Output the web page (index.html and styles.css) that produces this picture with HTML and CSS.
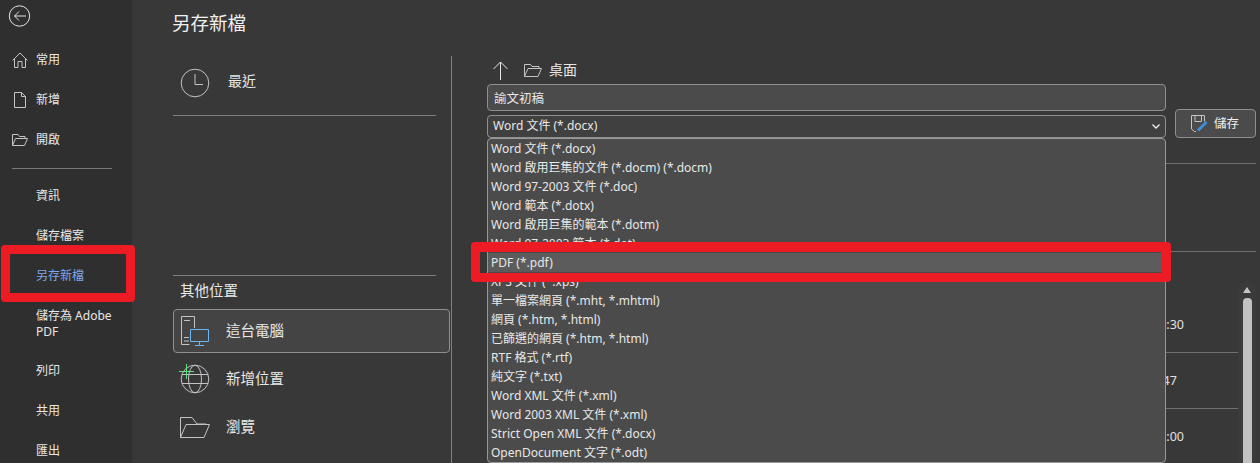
FILE: index.html
```html
<!DOCTYPE html>
<html lang="zh-Hant">
<head>
    <meta charset="UTF-8">
    <title>另存新檔</title>
    <link rel="stylesheet" href="styles.css">
</head>
<body>

<div class="app">
    <!-- Backstage menu -->
    <aside class="sidebar">
        <button class="back-btn" aria-label="返回">
            <svg width="23" height="22" viewBox="0 0 23 22"><circle cx="11.5" cy="11" r="10.2"/><path d="M6.5 11H18M11 6.5L6.5 11L11 15.5"/></svg>
        </button>
        <ul class="nav nav-top">
            <li class="nav-item">
                <span class="nav-icon"><svg width="16" height="16" viewBox="0 0 16 16"><path d="M.5 8.5L8 1L15.5 8.5M2.5 7V15.5H6V9.5H10V15.5H13.5V7"/></svg></span>常用
            </li>
            <li class="nav-item">
                <span class="nav-icon"><svg width="12" height="16" viewBox="0 0 12 16"><path d="M.5 .5H7.5L11.5 4.5V15.5H.5ZM7.5 .5V4.5H11.5"/></svg></span>新增
            </li>
            <li class="nav-item">
                <span class="nav-icon"><svg width="16" height="12" viewBox="0 0 16 12"><path d="M.5 11.5V.5H6L7.5 2.5H13V4.5M3.5 4.5H15.5L12.5 11.5H.5Z"/></svg></span>開啟
            </li>
        </ul>
        <hr class="nav-divider">
        <ul class="nav">
            <li class="nav-item">資訊</li>
            <li class="nav-item">儲存檔案</li>
            <li class="nav-item active">另存新檔</li>
            <li class="nav-item tall">儲存為 Adobe PDF</li>
            <li class="nav-item">列印</li>
            <li class="nav-item">共用</li>
            <li class="nav-item">匯出</li>
        </ul>
    </aside>

    <main class="main">
        <h1 class="page-title">另存新檔</h1>
        <div class="columns">
            <!-- Locations -->
            <section class="places">
                <div class="place recent">
                    <svg class="place-icon" width="30" height="30" viewBox="0 0 30 30"><circle cx="15" cy="15" r="13.8"/><path d="M15 6V16.5H23"/></svg>
                    <span class="recent-label">最近</span>
                </div>
                <div class="places-gap"></div>
                <h2 class="places-title">其他位置</h2>
                <div class="place selected">
                    <svg class="place-icon" width="30" height="30" viewBox="0 0 30 30"><path d="M14.5 12V.5H1.5V28.5H9.5M4 4.5H10M4 21.5H9M4 25H9"/><path class="blue" d="M10.5 13.5H28.5V25.5H10.5ZM19.5 25.5V29.5M15 29.5H24"/></svg>
                    <span>這台電腦</span>
                </div>
                <div class="place">
                    <svg class="place-icon" width="30" height="30" viewBox="0 0 30 30"><circle cx="15" cy="15" r="13.8"/><ellipse cx="15" cy="15" rx="6.5" ry="13.8"/><path d="M2 10.5H28M2 19.5H28"/><path class="green" d="M6.5 0V15M-1 7.5H14"/></svg>
                    <span>新增位置</span>
                </div>
                <div class="place">
                    <svg class="place-icon" width="30" height="21" viewBox="0 0 30 21"><path d="M.5 20.5V.5H12L17 7H26V7.5M6 7.5H29.5L24 20.5H.5Z"/></svg>
                    <span>瀏覽</span>
                </div>
            </section>

            <!-- Save form -->
            <section class="save-pane">
                <div class="path-row">
                    <svg class="up-arrow" width="15" height="19" viewBox="0 0 15 19"><path d="M7.5 1V19M.5 8L7.5 1L14.5 8"/></svg>
                    <svg class="path-folder" width="18" height="13" viewBox="0 0 18 13"><path d="M.5 12.5V.5H6.5L8 2.5H15V4.5M4 4.5H17.5L14 12.5H.5Z"/></svg>
                    <span class="path-name">桌面</span>
                </div>
                <div class="form-row">
                    <div class="fields">
                        <div class="name-input">諭文初稿</div>
                        <div class="type-select">
                            <span>Word 文件 (*.docx)</span>
                            <svg width="8" height="5" viewBox="0 0 8 5"><path d="M.5 .5L4 4L7.5 .5"/></svg>
                        </div>
                        <ul class="type-list">
                            <li>Word 文件 (*.docx)</li>
                            <li>Word 啟用巨集的文件 (*.docm) (*.docm)</li>
                            <li>Word 97-2003 文件 (*.doc)</li>
                            <li>Word 範本 (*.dotx)</li>
                            <li>Word 啟用巨集的範本 (*.dotm)</li>
                            <li>Word 97-2003 範本 (*.dot)</li>
                            <li class="current">PDF (*.pdf)</li>
                            <li>XPS 文件 (*.xps)</li>
                            <li>單一檔案網頁 (*.mht, *.mhtml)</li>
                            <li>網頁 (*.htm, *.html)</li>
                            <li>已篩選的網頁 (*.htm, *.html)</li>
                            <li>RTF 格式 (*.rtf)</li>
                            <li>純文字 (*.txt)</li>
                            <li>Word XML 文件 (*.xml)</li>
                            <li>Word 2003 XML 文件 (*.xml)</li>
                            <li>Strict Open XML 文件 (*.docx)</li>
                            <li>OpenDocument 文字 (*.odt)</li>
                        </ul>
                    </div>
                    <button class="save-btn">
                        <svg width="17" height="17" viewBox="0 0 17 17"><path d="M5 16.5H3.5L.5 14V.5H13.5V6.5M4 .5V6.5H10.5V.5"/><path class="pencil" d="M7 15.5L15.5 7"/></svg>
                        <span class="save-label">儲存</span>
                    </button>
                </div>
                <div class="file-head"></div>
                <div class="file-area">
                    <div class="file-rows">
                        <div class="file-spacer"></div>
                        <div class="file-row"><span>10:30</span></div>
                        <div class="file-row"><span>9:47</span></div>
                        <div class="file-row"><span>12:00</span></div>
                    </div>
                    <div class="scrollbar">
                        <div class="scroll-up"></div>
                        <div class="scroll-thumb"></div>
                    </div>
                </div>
            </section>
        </div>
    </main>
</div>

<!-- Red annotation boxes -->
<div class="callout callout-menu"></div>
<div class="callout callout-pdf"></div>

</body>
</html>
```

FILE: styles.css
```css
* { margin: 0; padding: 0; box-sizing: border-box; }
html, body { height: 100%; overflow: hidden; }
body { font-family: 'Noto Sans', 'Noto Sans CJK TC', sans-serif; font-size: 12px; color: #e8e8e8; background-color: #383838; position: relative; }
ul { list-style: none; }
svg { display: block; fill: none; stroke: #c4c4c4; stroke-width: 1; overflow: visible; }

.app { display: flex; height: 463px; overflow: hidden; }

/* Sidebar */
.sidebar { width: 132px; flex-shrink: 0; background-color: #2f2f2f; }
.back-btn { display: block; margin: 5px 0 0 8px; background: none; border: none; }
.back-btn svg { stroke: #e6e6e6; }
.nav-top { margin-top: 13px; }
.nav-item { display: flex; align-items: center; height: 40px; padding-left: 36px; padding-right: 6px; line-height: 16px; }
.nav-item.active { color: #7fa9ec; }
.nav-item.tall { height: 55px; }
.nav-icon { display: flex; justify-content: center; align-items: center; width: 16px; margin-left: -24px; margin-right: 8px; }
.nav-divider { width: 100px; height: 1px; margin: 8px 0 7px 12px; border: none; background-color: #7a7a7a; }

/* Main */
.main { flex: 1; min-width: 0; padding-left: 40px; }
.page-title { height: 46px; padding-top: 10px; font-size: 18.5px; font-weight: 400; line-height: 26px; color: #f0f0f0; }
.columns { display: flex; margin-top: 10px; }

/* Left column */
.places { width: 280px; height: 407px; padding-left: 1px; border-right: 1px solid #808080; flex-shrink: 0; }
.place { display: flex; align-items: center; width: 277px; height: 48px; padding-left: 7px; font-size: 14.5px; }
.place span { margin-bottom: 4px; }
.place-icon { width: 30px; flex-shrink: 0; margin-right: 16px; }
.recent { width: 263px; height: 60px; border-bottom: 1px solid #808080; padding-bottom: 6px; }
.place .recent-label { margin: 0 0 6px 2px; font-size: 14px; }
.places-gap { width: 263px; height: 160px; border-bottom: 1px solid #808080; }
.places-title { height: 33px; padding: 4px 0 0 7px; font-size: 14.5px; font-weight: 400; line-height: 20px; }
.selected { height: 44px; background-color: #444; border: 1px solid #8f8f8f; border-radius: 4px; padding-left: 6px; margin-bottom: 2px; }
.blue { stroke: #6db6f2; }
.green { stroke: #62e07f; }

/* Right column */
.save-pane { flex: 1; min-width: 0; padding-left: 35px; padding-right: 4px; }
.path-row { display: flex; align-items: center; height: 28px; padding-left: 6px; font-size: 14px; }
.path-name { margin-bottom: 2px; }
.up-arrow { stroke: #e6e6e6; margin-right: 16px; }
.path-folder { margin-right: 7px; }
.form-row { display: flex; align-items: flex-end; gap: 9px; }
.fields { position: relative; width: 680px; }
.name-input { display: flex; align-items: center; height: 27px; padding-left: 6px; background-color: #4b4b4b; border: 1px solid #8f8f8f; border-radius: 4px; font-size: 12.5px; }
.type-select { display: flex; align-items: center; justify-content: space-between; height: 23px; margin-top: 4px; padding: 0 5px 0 5px; background-color: #404040; border: 1px solid #8f8f8f; border-radius: 4px; font-size: 12px; }
.type-select span { margin-bottom: 3px; }
.type-select svg { stroke: #f0f0f0; stroke-width: 1.3; }
.type-list { position: absolute; top: 54px; left: 0; width: 100%; height: 325px; background-color: #4b4b4b; border: 1px solid #999; border-radius: 4px; overflow: hidden; z-index: 5; }
.type-list li { height: 19px; padding-left: 3px; line-height: 19px; white-space: nowrap; }
.type-list li.current { background-color: #5c5c5c; }
.save-btn { display: flex; align-items: center; gap: 6px; width: 81px; height: 29px; padding-left: 15px; background-color: #4b4b4b; border: 1px solid #8f8f8f; border-radius: 4px; color: #f0f0f0; font: inherit; font-size: 12.5px; }
.save-label { margin-bottom: 2px; }
.pencil { stroke: #3a8fd8; stroke-width: 3; }

/* Files behind the type list */
.file-head { height: 89px; margin-top: 25px; border-top: 1px solid #707070; border-bottom: 1px solid #707070; }
.file-area { display: flex; }
.file-rows { width: 751px; flex-shrink: 0; }
.file-spacer { height: 45px; }
.file-row { display: flex; align-items: center; height: 56px; padding-left: 665px; border-bottom: 1px solid #707070; font-size: 12.5px; color: #e0e0e0; }
.scrollbar { display: flex; flex-direction: column; align-items: center; width: 18px; height: 190px; margin-top: 31px; padding-top: 4px; background-color: #3b3b3b; border-radius: 6px 6px 0 0; }
.scroll-up { width: 0; height: 0; border-left: 4px solid transparent; border-right: 4px solid transparent; border-bottom: 6px solid #c4c4c4; }
.scroll-thumb { width: 9px; height: 170px; margin-top: 5px; background-color: #c2c2c2; border-radius: 4px 4px 0 0; }

/* Annotations */
.callout { position: absolute; border-style: solid; border-color: #ed1c24; border-radius: 4px; z-index: 10; }
.callout-menu { left: 1px; top: 245px; width: 134px; height: 57px; border-width: 9px; }
.callout-pdf { left: 471px; top: 242px; width: 700px; height: 40px; border-width: 10px 9px 9px 9px; }
```
